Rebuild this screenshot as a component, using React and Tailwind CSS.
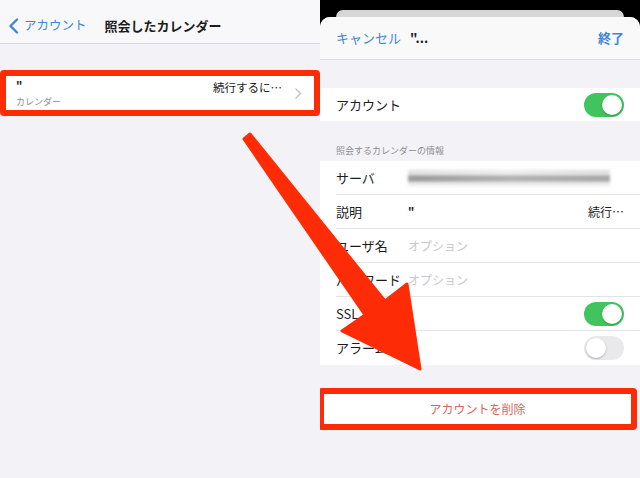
import React from 'react';

const FONT = { fontFamily: '"Noto Sans CJK JP", "Noto Sans", sans-serif' };

// ===== TOGGLE =====
const Toggle = ({ on }) => (
  <div
    className={`w-[40px] h-[24px] rounded-full p-[2px] flex ${
      on ? 'bg-[#3fc45e] justify-end' : 'bg-[#e9e9eb] justify-start'
    }`}
  >
    <div className="w-[20px] h-[20px] rounded-full bg-white shadow-[0_1px_2px_rgba(0,0,0,0.25)]" />
  </div>
);

// ===== FORM ROW =====
const Row = ({ label, children, last }) => (
  <div className="flex items-center h-[34px] pl-[16px]">
    <div
      className={`flex items-center h-full flex-1 pr-[16px] ${
        last ? '' : 'border-b border-[#e3e3e6]'
      }`}
    >
      <div className="w-[72px] text-[13px] text-[#1c1c1e] shrink-0">{label}</div>
      <div className="flex-1 flex items-center min-w-0">{children}</div>
    </div>
  </div>
);

// ===== LEFT PANE =====
const LeftPane = () => (
  <div className="w-[320px] h-full bg-[#f2f2f7] flex flex-col">
    <div className="h-[44px] bg-[#f8f8fa] border-b border-[#d9d9dd] flex items-center pt-[8px] pl-[8px]">
      <svg width="11" height="16" viewBox="0 0 11 16" className="mr-[5px]">
        <polyline points="9,1.5 2.5,8 9,14.5" fill="none" stroke="#3d87d6" strokeWidth="2.4" strokeLinecap="round" strokeLinejoin="round" />
      </svg>
      <span className="text-[12.5px] text-[#3d87d6]">アカウント</span>
      <span className="ml-[18px] text-[13px] font-bold text-[#1c1c1e]">照会したカレンダー</span>
    </div>

    <div className="mt-[26px] border-[6px] border-[#fe2c06] rounded-[4px]">
      <div className="bg-white h-[34px] flex items-center pl-[10px] pr-[12px]">
        <div className="flex-1 flex flex-col leading-none">
          <span className="text-[11px] text-[#1c1c1e] font-bold">"</span>
          <span className="text-[9px] text-[#8e8e93] mt-[6px]">カレンダー</span>
        </div>
        <span className="text-[11.5px] text-[#1c1c1e] -mt-[10px]">続行するに…</span>
        <svg width="7" height="11" viewBox="0 0 7 11" className="ml-[13px]">
          <polyline points="1,1 5.5,5.5 1,10" fill="none" stroke="#c4c4c8" strokeWidth="1.5" strokeLinecap="round" strokeLinejoin="round" />
        </svg>
      </div>
    </div>
  </div>
);

// ===== RIGHT PANE =====
const RightPane = () => (
  <div className="w-[320px] h-full bg-black flex flex-col">
    <div className="h-[17px] flex flex-col justify-end px-[16px]">
      <div className="h-[7px] bg-[#d6d6d8] rounded-t-[8px]" />
    </div>
    <div className="flex-1 bg-[#f2f2f7] rounded-t-[10px] overflow-hidden flex flex-col">
      <div className="h-[43px] bg-[#f9f9fa] border-b border-[#dcdce0] flex items-center px-[16px]">
        <span className="text-[13px] text-[#3d87d6]">キャンセル</span>
        <span className="ml-[9px] text-[13px] font-bold text-[#1c1c1e]">"...</span>
        <span className="ml-auto text-[13px] font-bold text-[#3d87d6]">終了</span>
      </div>

      <div className="h-[28px]" />
      <div className="bg-white h-[33px] flex items-center pl-[16px] pr-[16px]">
        <span className="flex-1 text-[13px] text-[#1c1c1e]">アカウント</span>
        <Toggle on />
      </div>

      <div className="h-[40px] flex items-end pl-[16px] pb-[4px]">
        <span className="text-[9px] text-[#8e8e93]">照会するカレンダーの情報</span>
      </div>

      <div className="bg-white">
        <Row label="サーバ">
          <div className="flex flex-col gap-[1px] w-full pr-[14px] blur-[1.5px]">
            <div className="h-[4px] w-full bg-gradient-to-r from-[#dedede] via-[#ebebeb] to-[#dcdcdc]" />
            <div className="h-[7px] w-full bg-gradient-to-r from-[#9c9c9c] via-[#b4b4b4] to-[#a8a8a8]" />
            <div className="h-[3px] w-full bg-[#e8e8e8]" />
          </div>
        </Row>
        <Row label="説明">
          <span className="text-[11px] text-[#1c1c1e] font-bold">"</span>
          <span className="ml-auto text-[12px] text-[#1c1c1e]">続行…</span>
        </Row>
        <Row label="ユーザ名">
          <span className="text-[12px] text-[#c7c7cc]">オプション</span>
        </Row>
        <Row label="パスワード">
          <span className="text-[12px] text-[#c7c7cc]">オプション</span>
        </Row>
        <Row label="SSL">
          <div className="ml-auto"><Toggle on /></div>
        </Row>
        <Row label="アラーム" last>
          <div className="ml-auto"><Toggle /></div>
        </Row>
      </div>

      <div className="h-[23px]" />
      <div className="-ml-[2px] mr-[3px] border-[6px] border-[#fe2c06] rounded-[4px]">
        <div className="bg-white h-[30px] flex items-center justify-center">
          <span className="text-[12px] text-[#d8655e]">アカウントを削除</span>
        </div>
      </div>
    </div>
  </div>
);

// ===== ARROW OVERLAY =====
const Arrow = () => (
  <svg className="absolute inset-0 pointer-events-none" width="640" height="478" viewBox="0 0 640 478">
    <polygon
      points="250,134 385,301 407,284 420,369 342,331 365,315 244,139"
      fill="#fe2c06"
      stroke="#fe2c06"
      strokeWidth="3"
      strokeLinejoin="round"
    />
  </svg>
);

export default function App() {
  return (
    <div className="relative w-[640px] h-[478px] flex overflow-hidden" style={FONT}>
      <LeftPane />
      <RightPane />
      <Arrow />
    </div>
  );
}
